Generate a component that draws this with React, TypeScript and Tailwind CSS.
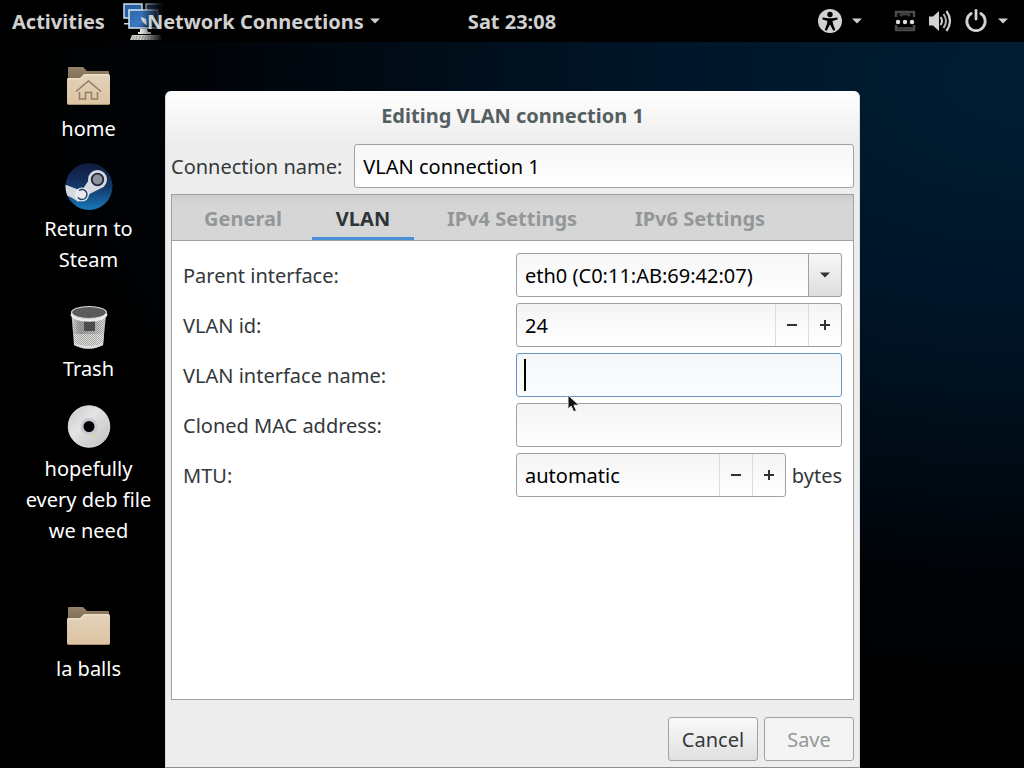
import { useState } from 'react';
import type { ReactNode } from 'react';

const Arrow = ({ className }: { className: string }) => (
  <svg viewBox="0 0 10 6" className={className} fill="currentColor" aria-hidden="true">
    <path d="M0 0.5h10L5 5.5z" />
  </svg>
);

const NetworkAppIcon = () => (
  <svg viewBox="0 0 40 40" className="h-10 w-10 shrink-0" aria-hidden="true">
    <defs>
      <linearGradient id="screen" x1="0" y1="0" x2="1" y2="1">
        <stop offset="0" stopColor="#2b66ad" />
        <stop offset="0.55" stopColor="#3c78c0" />
        <stop offset="1" stopColor="#0c2040" />
      </linearGradient>
      <linearGradient id="appFade" x1="0" y1="0" x2="1" y2="0">
        <stop offset="0.45" stopColor="#000" stopOpacity="0" />
        <stop offset="1" stopColor="#000" />
      </linearGradient>
    </defs>
    <rect x="1" y="3" width="18" height="14" fill="#2a5f9f" stroke="#cfe0ec" strokeWidth="1.5" />
    <rect x="23" y="3" width="16" height="12" fill="#1d3a60" stroke="#aab8c4" strokeWidth="1.5" />
    <path d="M1 22h5v1.5H1z" fill="#d8d8d8" />
    <rect x="6" y="9" width="29" height="18" fill="url(#screen)" stroke="#d6e6f2" strokeWidth="1.5" />
    <path d="M18 16c1 5 3 7 6 8l-1-6z" fill="#e9eef2" />
    <path d="M17 28h7l1 3h3v2H15v-2h2z" fill="#e2e2e2" />
    <path d="M9 34h28l2 5H7z" fill="#cfcfcb" />
    <path d="M10 36h27M9 38h29" stroke="#77776f" strokeWidth="0.8" strokeDasharray="2 1" />
    <rect width="40" height="40" fill="url(#appFade)" />
  </svg>
);

const AccessibilityIcon = () => (
  <svg viewBox="0 0 24 24" className="size-6" aria-hidden="true">
    <circle cx="12" cy="12" r="12" fill="#d2d2d2" />
    <circle cx="12" cy="5.5" r="2.7" fill="#000" />
    <path d="M4.5 8.5L10 9.3h4l5.500-.8v2L14.500 12l.6 3 2.200 6-2 .7L12 15.500l-3.300 6.200-2-.7 2.200-6 .6-3-5-1.500z" fill="#000" />
  </svg>
);

const WiredIcon = () => (
  <svg viewBox="0 0 22 22" className="size-[22px]" aria-hidden="true">
    <path d="M2 7V2h18v5M2 15v5h18v-5" fill="none" stroke="#4b4b4b" strokeWidth="2.5" strokeLinejoin="round" />
    <path d="M6 6l2-2h6l2 2M3 18.500h16" fill="none" stroke="#3c3c3c" strokeWidth="3" />
    <circle cx="4" cy="12" r="2.200" fill="#dedede" />
    <circle cx="11" cy="12" r="2.200" fill="#dedede" />
    <circle cx="18" cy="12" r="2.200" fill="#dedede" />
  </svg>
);

const SpeakerIcon = () => (
  <svg viewBox="0 0 24 24" className="size-6" fill="none" stroke="#d2d2d2" aria-hidden="true">
    <path d="M1 7.500h4l6-5.500v20l-6-5.500H1z" fill="#d2d2d2" stroke="none" />
    <path d="M12.500 8q3 4 0 8" strokeWidth="2" />
    <path d="M15.500 5q5 7 0 14" strokeWidth="2" stroke="#b4b4b4" />
    <path d="M18.500 2q7 10 0 20" strokeWidth="2.200" />
  </svg>
);

const PowerIcon = () => (
  <svg viewBox="0 0 24 24" className="size-6" fill="none" stroke="#d2d2d2" strokeWidth="2.800" strokeLinecap="round" aria-hidden="true">
    <path d="M12 1.500v8.500M7.200 4.500a9.200 9.200 0 1 0 9.600 0" />
  </svg>
);

const FolderIcon = ({ home = false }: { home?: boolean }) => (
  <svg viewBox="1 0 48 48" className="size-12" aria-hidden="true">
    <defs>
      <linearGradient id="folderFront" x1="0" y1="0" x2="0" y2="1">
        <stop offset="0" stopColor="#e3d2ba" />
        <stop offset="1" stopColor="#dcc3a2" />
      </linearGradient>
      <linearGradient id="folderBack" x1="0" y1="0" x2="0" y2="1">
        <stop offset="0" stopColor="#95826b" />
        <stop offset="1" stopColor="#7c6a52" />
      </linearGradient>
    </defs>
    <path d="M4 6q0-1 1-1h14l4 4h21q1 0 1 1v10H4z" fill="url(#folderBack)" />
    <path d="M3 17q0-1 1-1h12l4-4h24q2 0 2 2v27q0 2-2 2H5q-2 0-2-2z" fill="url(#folderFront)" />
    <path d="M4 17h12.500l4-4H45" fill="none" stroke="#f2e6d2" />
    <path d="M4 42.500h41" stroke="#a98f6c" />
    {home && (
      <>
        <path d="M12 29.500l12.500-10.500L37 29.500" fill="none" stroke="#8f7d64" strokeWidth="1.600" />
        <path d="M15.500 30v7h6v-6.500h6v6.500h6v-7" fill="none" stroke="#8f7d64" strokeWidth="1.500" />
      </>
    )}
  </svg>
);

const SteamIcon = () => (
  <svg viewBox="0 0 48 48" className="size-12" aria-hidden="true">
    <defs>
      <linearGradient id="steamDisc" x1="0" y1="0" x2="0" y2="1">
        <stop offset="0" stopColor="#12193f" />
        <stop offset="0.5" stopColor="#133668" />
        <stop offset="1" stopColor="#1a7ab8" />
      </linearGradient>
      <clipPath id="steamClip">
        <circle cx="24" cy="24.500" r="23.500" />
      </clipPath>
    </defs>
    <circle cx="24" cy="24.500" r="23.500" fill="url(#steamDisc)" />
    <g clipPath="url(#steamClip)">
      <path d="M-1 22l14 5.500 5-.8 6-9 4-7 12 10-5 6-10 5-4 5-8 3-6-4-8-3.500z" fill="#d5d8e0" />
      <circle cx="32.500" cy="17.500" r="9.500" fill="#d5d8e0" />
      <circle cx="17" cy="32.500" r="7" fill="#e8e9ee" />
    </g>
    <circle cx="32.500" cy="17.500" r="5.800" fill="#8d929b" stroke="#20283a" strokeWidth="1.800" />
    <path d="M14 28.500a5 5 0 1 1-1 7" fill="none" stroke="#1d3d63" strokeWidth="1.400" />
  </svg>
);

const TrashIcon = () => (
  <svg viewBox="1 0 48 48" className="size-12" aria-hidden="true">
    <defs>
      <pattern id="mesh" width="2" height="2" patternUnits="userSpaceOnUse">
        <path d="M0 0h1v1H0zM1 1h1v1H1z" fill="#6c6c6c" fillOpacity="0.450" />
      </pattern>
      <linearGradient id="bin" x1="0" y1="0" x2="1" y2="0">
        <stop offset="0" stopColor="#e4e4e4" />
        <stop offset="0.250" stopColor="#9c9c9c" />
        <stop offset="0.650" stopColor="#b4b4b4" />
        <stop offset="1" stopColor="#e2e2e2" />
      </linearGradient>
    </defs>
    <path d="M7.500 12L10 43q14.500 8 29 0l3-31z" fill="url(#bin)" />
    <path d="M10 32h30l-1 11q-14.500 6-29 0z" fill="#e6e6e3" fillOpacity="0.800" />
    <path d="M20 18h11v11H20z" fill="#444" />
    <path d="M7.500 12L10 43q14.500 8 29 0l3-31z" fill="url(#mesh)" />
    <path d="M10 41q14.500 6 29 0v2q-14.500 7-29 0z" fill="#dedede" />
    <ellipse cx="25" cy="10.500" rx="17.500" ry="6" fill="#555" />
    <ellipse cx="25" cy="10.500" rx="17.500" ry="6" fill="url(#mesh)" stroke="#dcdcdc" strokeWidth="1.200" />
    <path d="M7.500 12q2 6 17.500 6.500Q40.500 18 42.500 12" fill="none" stroke="#ececec" strokeWidth="2.500" />
  </svg>
);

const DiscIcon = () => (
  <svg viewBox="1 0 48 48" className="size-12" aria-hidden="true">
    <defs>
      <linearGradient id="disc" x1="0" y1="0" x2="1" y2="1">
        <stop offset="0" stopColor="#c8c8c8" />
        <stop offset="0.4" stopColor="#e4e4e4" />
        <stop offset="0.6" stopColor="#d6d6d6" />
        <stop offset="1" stopColor="#c0c0c0" />
      </linearGradient>
    </defs>
    <circle cx="25" cy="24.500" r="20.800" fill="url(#disc)" stroke="#eeeeee" strokeWidth="0.800" />
    <circle cx="25" cy="24.500" r="8.500" fill="#c8c8ce" />
    <path d="M29 32l4 5" stroke="#d8d3b0" strokeWidth="3" />
    <circle cx="25" cy="24.500" r="5.500" fill="#000" />
  </svg>
);

const PointerIcon = () => (
  <svg viewBox="0 0 14 20" className="h-5 w-3.5" aria-hidden="true">
    <path d="M1 1v14l3.200-2.800 2.600 5.600 2.600-1.200-2.500-5.400H12z" fill="#111" stroke="#eee" strokeWidth="1" />
  </svg>
);

// Desktop grid is made of 20px rows, each shortcut spans a few of them
const shortcuts: { label: string; icon: ReactNode; span: string }[] = [
  { label: 'home', icon: <FolderIcon home />, span: 'row-span-5' },
  { label: 'Return to Steam', icon: <SteamIcon />, span: 'row-span-7' },
  { label: 'Trash', icon: <TrashIcon />, span: 'row-span-5' },
  { label: 'hopefully every deb file we need', icon: <DiscIcon />, span: 'row-span-10' },
  { label: 'la balls', icon: <FolderIcon />, span: 'row-span-5' },
];

const tabs = [
  { label: 'General', width: 'w-[122px]' },
  { label: 'VLAN', width: 'w-[102px]' },
  { label: 'IPv4 Settings', width: 'w-[180px]' },
  { label: 'IPv6 Settings', width: 'w-[180px]' },
];

const Spinner = ({ id, value, className }: { id: string; value: string; className: string }) => (
  <div className={`flex h-11 rounded-[3px] border border-[#a1a1a1] bg-linear-to-b from-[#f4f4f4] to-white ${className}`}>
    <input id={id} type="text" defaultValue={value} className="min-w-0 flex-1 px-2 text-black outline-none" />
    <button type="button" aria-label="Decrease" className="flex w-[33px] items-center justify-center border-l border-[#dcdcdc]">
      <svg viewBox="0 0 12 12" className="size-3" aria-hidden="true">
        <path d="M1 6h10" stroke="#2e3436" strokeWidth="2" />
      </svg>
    </button>
    <button type="button" aria-label="Increase" className="flex w-[33px] items-center justify-center border-l border-[#dcdcdc]">
      <svg viewBox="0 0 12 12" className="size-3" aria-hidden="true">
        <path d="M1 6h10M6 1v10" stroke="#2e3436" strokeWidth="2" />
      </svg>
    </button>
  </div>
);

const TopBar = () => (
  <header className="grid h-[42px] grid-cols-[1fr_auto_1fr] items-center bg-black px-3 font-bold text-[#d0d0d0]">
    <div className="flex items-center">
      <button type="button">Activities</button>
      <button type="button" className="ml-[18px] flex items-center">
        <NetworkAppIcon />
        <span className="-ml-4 whitespace-nowrap">Network Connections</span>
        <Arrow className="ml-1.5 w-2.5" />
      </button>
    </div>
    <button type="button">Sat 23:08</button>
    <div className="flex items-center justify-end pr-1">
      <button type="button" aria-label="Accessibility" className="flex items-center gap-2.5">
        <AccessibilityIcon />
        <Arrow className="w-2.5" />
      </button>
      <button type="button" aria-label="System menu" className="ml-8 flex items-center gap-3">
        <WiredIcon />
        <SpeakerIcon />
        <span className="flex items-center gap-2.5">
          <PowerIcon />
          <Arrow className="w-2.5" />
        </span>
      </button>
    </div>
  </header>
);

const Field = ({ label, htmlFor, children }: { label: string; htmlFor: string; children: ReactNode }) => (
  <div className="grid grid-cols-[333px_minmax(0,1fr)] items-center">
    <label htmlFor={htmlFor}>{label}</label>
    {children}
  </div>
);

const VlanPanel = () => (
  <div role="tabpanel" className="flex flex-1 flex-col gap-1.5 bg-white px-[11px] py-3">
    <Field label="Parent interface:" htmlFor="parent">
      <div className="relative flex h-11">
        <select
          id="parent"
          className="w-full appearance-none rounded-[3px] border border-[#a1a1a1] bg-linear-to-b from-[#f6f6f6] to-white px-2 text-black outline-none"
        >
          <option>eth0 (C0:11:AB:69:42:07)</option>
        </select>
        <span className="pointer-events-none absolute inset-y-0 right-0 flex w-[34px] items-center justify-center rounded-r-[3px] border border-[#a1a1a1] bg-linear-to-b from-[#f8f8f8] to-[#dedede] text-[#2e3436]">
          <Arrow className="w-2.5" />
        </span>
      </div>
    </Field>
    <Field label="VLAN id:" htmlFor="vlan-id">
      <Spinner id="vlan-id" value="24" className="w-full" />
    </Field>
    <Field label="VLAN interface name:" htmlFor="vlan-name">
      <div className="relative">
        <input
          id="vlan-name"
          type="text"
          className="block h-11 w-full rounded-[3px] border border-[#6a94c4] bg-linear-to-b from-[#f4f6f7] to-[#fbfeff] px-2 text-black caret-transparent outline-none"
        />
        <span className="absolute top-1.5 left-2 h-8 w-0.5 bg-black" />
        <span className="pointer-events-none absolute top-[41px] left-[51px]">
          <PointerIcon />
        </span>
      </div>
    </Field>
    <Field label="Cloned MAC address:" htmlFor="mac">
      <input
        id="mac"
        type="text"
        className="block h-11 w-full rounded-[3px] border border-[#a1a1a1] bg-linear-to-b from-[#f4f4f4] to-white px-2 text-black outline-none"
      />
    </Field>
    <Field label="MTU:" htmlFor="mtu">
      <div className="flex items-center gap-1.5">
        <Spinner id="mtu" value="automatic" className="min-w-0 flex-1" />
        <span>bytes</span>
      </div>
    </Field>
  </div>
);

const EditorWindow = () => {
  const [active, setActive] = useState('VLAN');

  return (
    <main className="flex flex-1 flex-col rounded-t-md border-x border-b border-x-[#d8d8d8] border-b-[#8f8f8f] bg-[#ededed] px-[5px] pb-1.5 text-[#33383a]">
      <h1 className="-mx-[5px] flex h-[53px] items-center justify-center rounded-t-md bg-linear-to-b from-white to-[#ededed] pb-1 font-bold text-[#555f62]">
        Editing VLAN connection 1
      </h1>
      <div className="flex items-center gap-3">
        <label htmlFor="name">Connection name:</label>
        <input
          id="name"
          type="text"
          defaultValue="VLAN connection 1"
          className="h-11 min-w-0 flex-1 rounded-[3px] border border-[#a1a1a1] bg-linear-to-b from-[#f6f6f6] to-white px-2 text-black outline-none"
        />
      </div>
      <section className="mt-1.5 flex flex-1 flex-col border border-[#a1a1a1]">
        <div role="tablist" className="flex h-[46px] gap-2 border-b border-[#a1a1a1] bg-linear-to-b from-[#cccccc] via-[#d6d6d6] via-20% to-[#d6d6d6] px-2.5 font-bold">
          {tabs.map((tab) => (
            <button
              key={tab.label}
              type="button"
              role="tab"
              aria-selected={tab.label === active}
              onClick={() => setActive(tab.label)}
              className={`${tab.width} border-b-[3px] pt-1 ${
                tab.label === active ? 'border-[#4a90d9] text-[#2e3436]' : 'border-transparent text-[#949797]'
              }`}
            >
              {tab.label}
            </button>
          ))}
        </div>
        <VlanPanel />
      </section>
      <footer className="mt-[17px] flex justify-end gap-1.5">
        <button type="button" className="h-11 w-[90px] rounded-[3px] border border-[#a1a1a1] bg-linear-to-b from-[#fafafa] to-[#e0e0e0]">
          Cancel
        </button>
        <button type="button" disabled className="h-11 w-[90px] rounded-[3px] border border-[#a1a1a1] bg-[#f4f4f4] text-[#949797]">
          Save
        </button>
      </footer>
    </main>
  );
};

export default function App() {
  return (
    <div className='flex min-h-screen flex-col bg-black font-["Noto_Sans",sans-serif] text-[20px] leading-[31px]'>
      <TopBar />
      <div className="grid flex-1 grid-cols-[165px_minmax(0,1fr)_164px] bg-[radial-gradient(ellipse_100%_85%_at_100%_5%,#001e34_0%,#001426_40%,#000408_80%,#000_100%)]">
        <nav className="grid auto-rows-[20px] pt-5 pl-3">
          {shortcuts.map((item) => (
            <a key={item.label} href="#" className={`${item.span} flex flex-col items-center gap-[3px] text-center text-white`}>
              {item.icon}
              <span className="max-w-[130px]">{item.label}</span>
            </a>
          ))}
        </nav>
        <div className="flex flex-col pt-[49px]">
          <EditorWindow />
        </div>
      </div>
    </div>
  );
}
